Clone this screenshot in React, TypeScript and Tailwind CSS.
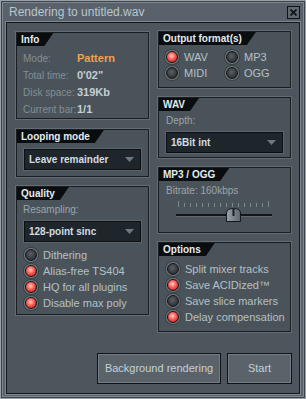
import React from "react";

function Panel({
  title,
  className,
  children,
}: {
  title: string;
  className?: string;
  children?: React.ReactNode;
}) {
  return (
    <div
      className={`flex flex-col border border-[#1a1e21] bg-[#4a5359] shadow-[0_0_0_1px_#636c73] ${className}`}
    >
      <div className="self-start h-[13px] bg-[#0a0d0f] pl-[4px] pr-[14px] text-[10px] font-bold leading-[13px] text-[#e4ecf0] [clip-path:polygon(0_0,100%_0,calc(100%-9px)_100%,0_100%)]">
        {title}
      </div>
      {children}
    </div>
  );
}

function Radio({ on, label }: { on?: boolean; label: string }) {
  return (
    <div className="flex h-[16px] items-center gap-[5px]">
      <div className="flex h-[14px] w-[14px] items-center justify-center rounded-full bg-[#737c83] shadow-[0_0_0_1px_#3a4146]">
        <div
          className={`h-[12px] w-[12px] rounded-full border border-[#121517] ${
            on
              ? "bg-[radial-gradient(circle_at_45%_40%,#ffd0c8_0%,#ff6f66_35%,#d8262a_75%,#9c1418_100%)]"
              : "bg-[radial-gradient(circle_at_45%_40%,#5a6065_0%,#34393d_60%,#1d2124_100%)]"
          }`}
        />
      </div>
      <span className="text-[11px] text-[#b4c0c8]">{label}</span>
    </div>
  );
}

function Dropdown({ value }: { value: string }) {
  return (
    <div className="flex h-[21px] items-center justify-between border border-[#0c0f11] bg-[#1f262b] pl-[4px] pr-[6px] shadow-[0_0_0_1px_#5c656c]">
      <span className="text-[10px] font-bold text-[#d2dce2]">{value}</span>
      <svg width="9" height="5" viewBox="0 0 9 5">
        <path d="M0 0 H9 L4.5 5 Z" fill="#6e787f" />
      </svg>
    </div>
  );
}

function Slider() {
  const ticks = Array(16)
    .fill(0)
    .map((_, i) => 2 + i * 6);
  return (
    <svg width="96" height="26" viewBox="0 0 96 26" className="ml-[17px]">
      {ticks.map((x, i) => (
        <rect
          key={i}
          x={x}
          y={i === 0 || i === ticks.length - 1 ? 2 : 4}
          width="1"
          height={i === 0 || i === ticks.length - 1 ? 6 : 4}
          fill="#7d878e"
        />
      ))}
      <rect x="0" y="15" width="96" height="2" fill="#121517" />
      <rect x="0" y="17" width="96" height="1" fill="#5f686f" />
      <defs>
        <linearGradient id="knob" x1="0" y1="0" x2="1" y2="0">
          <stop offset="0" stopColor="#9aa3a9" />
          <stop offset="1" stopColor="#5d666d" />
        </linearGradient>
      </defs>
      <path
        d="M50.5 22.5 V14 Q50.5 9.5 57.5 9.5 Q64.5 9.5 64.5 14 V22.5 Z"
        fill="url(#knob)"
        stroke="#16191c"
      />
      <rect x="56.5" y="10" width="2" height="7" fill="#1a1e21" />
    </svg>
  );
}

const label = "w-[54px] text-[10px] text-[#848e95]";
const value = "text-[11px] font-bold text-[#c4ced4]";

export default function App() {
  return (
    <div className="flex h-[399px] w-[306px] flex-col border border-[#98a1a7] bg-[#59626a] font-['Liberation_Sans',Arial,sans-serif] shadow-[inset_0_0_0_1px_#3c4449,inset_0_0_0_2px_#7e878d]">
      <div className="flex h-[21px] shrink-0 items-center justify-between pl-[8px] pr-[5px] pt-[1px]">
        <span className="text-[12px] text-[#b8c6cf]">Rendering to untitled.wav</span>
        <div className="flex h-[13px] w-[13px] items-center justify-center border border-[#111416] bg-[#5f686f]">
          <svg width="7" height="7" viewBox="0 0 7 7">
            <path d="M0.5 0.5 L6.5 6.5 M6.5 0.5 L0.5 6.5" stroke="#0e1113" strokeWidth="1.6" />
          </svg>
        </div>
      </div>
      <div className="mx-[5px] mb-[4px] flex flex-1 flex-col border border-[#14181b] bg-[#4d565d] pl-[9px] pr-[7px] pt-[8px] shadow-[0_0_0_1px_#7f888e]">
        <div className="flex gap-[9px]">
          {/* left column */}
          <div className="flex w-[133px] flex-col gap-[10px] pt-[1px]">
            <Panel title="Info" className="h-[87px]">
              <div className="flex flex-col pl-[6px] pt-[4px] leading-[16px]">
                <div className="flex items-baseline">
                  <span className={label}>Mode:</span>
                  <span className="text-[11px] font-bold text-[#f0a24e]">Pattern</span>
                </div>
                <div className="flex items-baseline">
                  <span className={label}>Total time:</span>
                  <span className={value}>0'02"</span>
                </div>
                <div className="flex items-baseline">
                  <span className={label}>Disk space:</span>
                  <span className={value}>319Kb</span>
                </div>
                <div className="flex items-baseline">
                  <span className={label}>Current bar:</span>
                  <span className={value}>1/1</span>
                </div>
              </div>
            </Panel>
            <Panel title="Looping mode" className="h-[48px]">
              <div className="mx-[7px] mt-[6px]">
                <Dropdown value="Leave remainder" />
              </div>
            </Panel>
            <Panel title="Quality" className="mt-[-1px] h-[129px]">
              <span className="pl-[6px] pt-[2px] text-[10px] leading-[16px] text-[#9aa5ac]">
                Resampling:
              </span>
              <div className="mx-[7px] mt-[3px]">
                <Dropdown value="128-point sinc" />
              </div>
              <div className="flex flex-col pl-[7px] pt-[5px]">
                <Radio label="Dithering" />
                <Radio on label="Alias-free TS404" />
                <Radio on label="HQ for all plugins" />
                <Radio on label="Disable max poly" />
              </div>
            </Panel>
          </div>
          {/* right column */}
          <div className="flex w-[133px] flex-col gap-[9px]">
            <Panel title="Output format(s)" className="h-[57px]">
              <div className="grid grid-cols-[60px_1fr] pl-[6px] pt-[4px]">
                <Radio on label="WAV" />
                <Radio label="MP3" />
                <Radio label="MIDI" />
                <Radio label="OGG" />
              </div>
            </Panel>
            <Panel title="WAV" className="h-[61px]">
              <span className="pl-[7px] pt-[2px] text-[10px] leading-[16px] text-[#9aa5ac]">Depth:</span>
              <div className="mx-[7px] mt-[3px]">
                <Dropdown value="16Bit int" />
              </div>
            </Panel>
            <Panel title="MP3 / OGG" className="h-[66px]">
              <span className="pl-[7px] pt-[2px] text-[10px] leading-[16px] text-[#9aa5ac]">
                Bitrate: 160kbps
              </span>
              <Slider />
            </Panel>
            <Panel title="Options" className="h-[90px]">
              <div className="flex flex-col pl-[7px] pt-[5px]">
                <Radio label="Split mixer tracks" />
                <Radio on label="Save ACIDized™" />
                <Radio label="Save slice markers" />
                <Radio on label="Delay compensation" />
              </div>
            </Panel>
          </div>
        </div>
        <div className="mt-[21px] flex justify-end gap-[6px]">
          <button className="h-[31px] w-[124px] border border-[#101315] bg-[#5a636a] text-[11px] text-[#c4d0d8] shadow-[inset_0_0_0_1px_#737c83]">
            Background rendering
          </button>
          <button className="h-[31px] w-[65px] border border-[#101315] bg-[#5a636a] text-[11px] text-[#c4d0d8] shadow-[inset_0_0_0_1px_#737c83]">
            Start
          </button>
        </div>
      </div>
    </div>
  );
}
